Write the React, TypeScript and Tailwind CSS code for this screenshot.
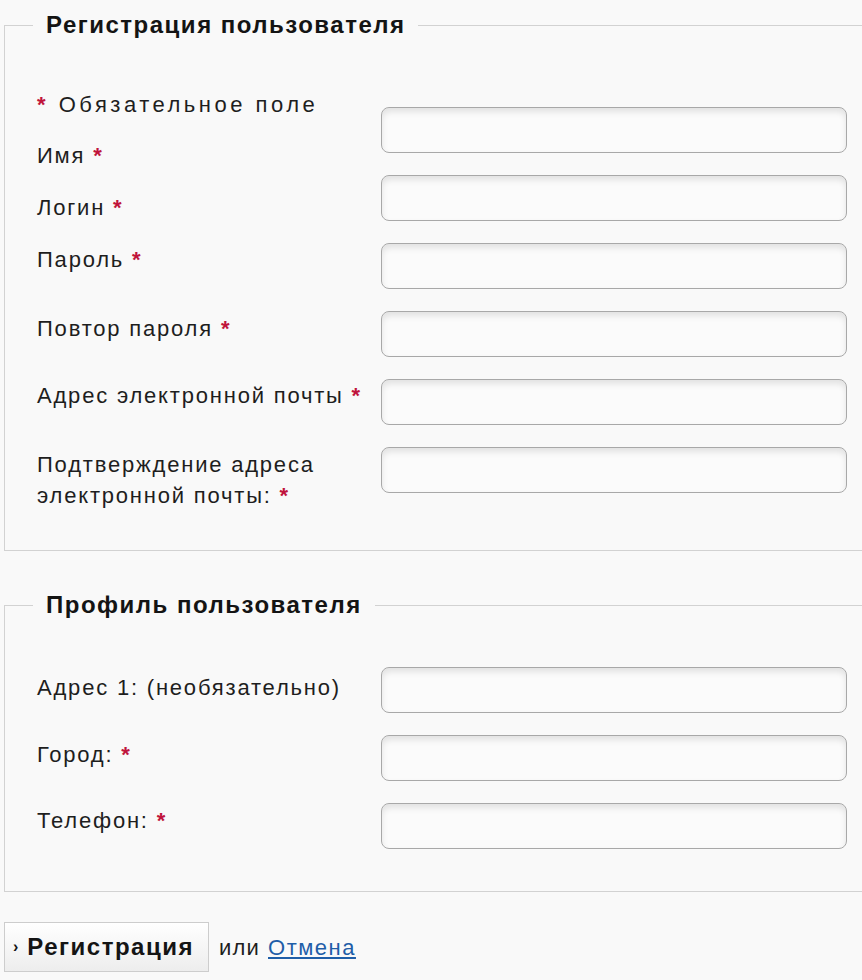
import React from "react";

const Star = () => <span className="text-[#c0143c] font-bold">*</span>;

const Input = () => (
  <div className="h-[46px] w-[466px] rounded-[8px] border border-[#a8a8a8] bg-[#fbfbfb] shadow-[inset_0_4px_6px_rgba(0,0,0,0.10)]" />
);

export default function App() {
  return (
    <div
      className="w-[862px] h-[980px] overflow-hidden bg-[#f9f9f9] pt-[10px] text-[#1e1e1e]"
      style={{ fontFamily: '"Liberation Sans", Arial, sans-serif' }}
    >
      <fieldset className="ml-[4px] border border-r-0 border-[#d2d2d2]">
        <legend className="ml-[28px] px-[13px] text-[24px] leading-[30px] font-bold tracking-[1.5px] text-[#141414]">
          Регистрация пользователя
        </legend>
        <div className="flex pl-[32px] pt-[49px] pb-[39px] text-[22px] leading-[31px] tracking-[1.8px]">
          <div className="w-[344px] flex flex-col">
            <div className="tracking-[3.5px]">
              <Star /> Обязательное поле
            </div>
            <div className="mt-[20px]">
              Имя <Star />
            </div>
            <div className="mt-[21px]">
              Логин <Star />
            </div>
            <div className="mt-[21px]">
              Пароль <Star />
            </div>
            <div className="mt-[38px]">
              Повтор пароля <Star />
            </div>
            <div className="mt-[36px]">
              Адрес электронной почты <Star />
            </div>
            <div className="mt-[38px]">
              Подтверждение адреса
              <br />
              электронной почты: <Star />
            </div>
          </div>
          <div className="mt-[18px] flex flex-col gap-[22px]">
            <Input />
            <Input />
            <Input />
            <Input />
            <Input />
            <Input />
          </div>
        </div>
      </fieldset>

      <fieldset className="ml-[4px] mt-[39px] border border-r-0 border-[#d2d2d2]">
        <legend className="ml-[28px] px-[13px] text-[24px] leading-[30px] font-bold tracking-[1.5px] text-[#141414]">
          Профиль пользователя
        </legend>
        <div className="flex pl-[32px] pb-[42px] text-[22px] leading-[31px] tracking-[1.8px]">
          <div className="w-[344px] flex flex-col pt-[52px]">
            <div>Адрес 1: (необязательно)</div>
            <div className="mt-[36px]">
              Город: <Star />
            </div>
            <div className="mt-[35px]">
              Телефон: <Star />
            </div>
          </div>
          <div className="pt-[47px] flex flex-col gap-[22px]">
            <Input />
            <Input />
            <Input />
          </div>
        </div>
      </fieldset>

      <div className="mt-[30px] ml-[4px] flex items-center">
        <button className="h-[50px] w-[205px] flex items-center border border-[#cdcdcd] bg-gradient-to-b from-[#ffffff] to-[#ededed] pl-[8px] text-[#141414]">
          <span className="text-[16px] font-bold mr-[9px] leading-none">›</span>
          <span className="text-[24px] font-bold tracking-[1.5px]">Регистрация</span>
        </button>
        <span className="ml-[10px] text-[22px] tracking-[1.2px]">или</span>
        <a href="#" className="ml-[8px] text-[22px] tracking-[1.5px] text-[#1f5ea8] underline">
          Отмена
        </a>
      </div>
    </div>
  );
}
